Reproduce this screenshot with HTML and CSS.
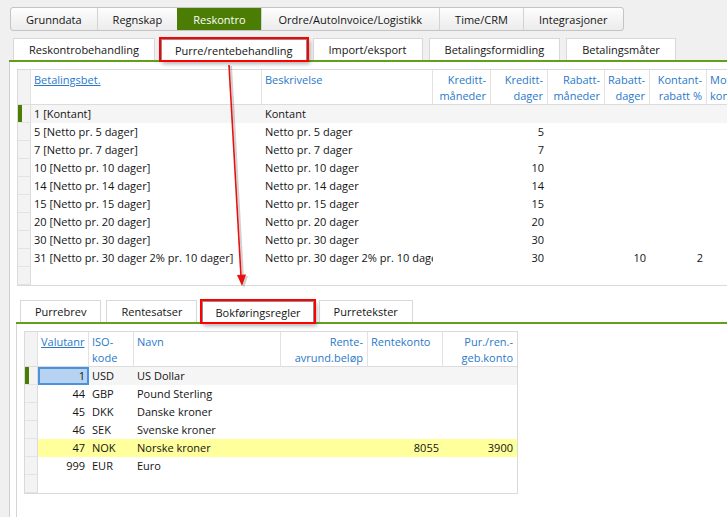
FILE: index.html
```html
<!DOCTYPE html>
<html lang="no">
  <head>
    <meta charset="utf-8" />
    <title>Reskontro – Purre/rentebehandling</title>
    <link rel="stylesheet" href="styles.css">
  </head>
  <body>
    <nav class="main-tabs">
      <span class="main-tab">Grunndata</span>
      <span class="main-tab">Regnskap</span>
      <span class="main-tab active">Reskontro</span>
      <span class="main-tab wide">Ordre/AutoInvoice/Logistikk</span>
      <span class="main-tab">Time/CRM</span>
      <span class="main-tab">Integrasjoner</span>
    </nav>

    <div class="sub-tabs">
      <span class="sub-tab">Reskontrobehandling</span>
      <span class="sub-tab active marked">Purre/rentebehandling</span>
      <span class="sub-tab">Import/eksport</span>
      <span class="sub-tab">Betalingsformidling</span>
      <span class="sub-tab">Betalingsmåter</span>
    </div>

    <section class="panel">
      <div class="grid terms">
        <div class="row head">
          <span class="ind"></span>
          <span class="sorted">Betalingsbet.</span>
          <span>Beskrivelse</span>
          <span class="num">Kreditt-<br>måneder</span>
          <span class="num">Kreditt-<br>dager</span>
          <span class="num">Rabatt-<br>måneder</span>
          <span class="num">Rabatt-<br>dager</span>
          <span class="num">Kontant-<br>rabatt %</span>
          <span>Mottaks-<br>konto</span>
        </div>
        <div class="row current">
          <span class="ind"></span>
          <span>1 [Kontant]</span>
          <span>Kontant</span>
          <span></span><span></span><span></span><span></span><span></span><span></span>
        </div>
        <div class="row">
          <span class="ind"></span>
          <span>5 [Netto pr. 5 dager]</span>
          <span>Netto pr. 5 dager</span>
          <span></span><span class="num">5</span><span></span><span></span><span></span><span></span>
        </div>
        <div class="row">
          <span class="ind"></span>
          <span>7 [Netto pr. 7 dager]</span>
          <span>Netto pr. 7 dager</span>
          <span></span><span class="num">7</span><span></span><span></span><span></span><span></span>
        </div>
        <div class="row">
          <span class="ind"></span>
          <span>10 [Netto pr. 10 dager]</span>
          <span>Netto pr. 10 dager</span>
          <span></span><span class="num">10</span><span></span><span></span><span></span><span></span>
        </div>
        <div class="row">
          <span class="ind"></span>
          <span>14 [Netto pr. 14 dager]</span>
          <span>Netto pr. 14 dager</span>
          <span></span><span class="num">14</span><span></span><span></span><span></span><span></span>
        </div>
        <div class="row">
          <span class="ind"></span>
          <span>15 [Netto pr. 15 dager]</span>
          <span>Netto pr. 15 dager</span>
          <span></span><span class="num">15</span><span></span><span></span><span></span><span></span>
        </div>
        <div class="row">
          <span class="ind"></span>
          <span>20 [Netto pr. 20 dager]</span>
          <span>Netto pr. 20 dager</span>
          <span></span><span class="num">20</span><span></span><span></span><span></span><span></span>
        </div>
        <div class="row">
          <span class="ind"></span>
          <span>30 [Netto pr. 30 dager]</span>
          <span>Netto pr. 30 dager</span>
          <span></span><span class="num">30</span><span></span><span></span><span></span><span></span>
        </div>
        <div class="row">
          <span class="ind"></span>
          <span>31 [Netto pr. 30 dager 2% pr. 10 dager]</span>
          <span>Netto pr. 30 dager 2% pr. 10 dager</span>
          <span></span><span class="num">30</span><span></span><span class="num">10</span><span class="num">2</span><span></span>
        </div>
        <div class="row">
          <span class="ind"></span>
          <span></span><span></span><span></span><span></span><span></span><span></span><span></span><span></span>
        </div>
      </div>

      <div class="lower">
        <div class="sub-tabs small">
          <span class="sub-tab">Purrebrev</span>
          <span class="sub-tab">Rentesatser</span>
          <span class="sub-tab active marked">Bokføringsregler</span>
          <span class="sub-tab">Purretekster</span>
        </div>

        <div class="inner-panel">
          <div class="grid currency">
            <div class="row head">
              <span class="ind"></span>
              <span class="num sorted">Valutanr</span>
              <span>ISO-<br>kode</span>
              <span>Navn</span>
              <span class="num">Rente-<br>avrund.beløp</span>
              <span>Rentekonto</span>
              <span class="num">Pur./ren.-<br>geb.konto</span>
            </div>
            <div class="row current">
              <span class="ind"></span>
              <span class="num focus">1</span>
              <span>USD</span>
              <span>US Dollar</span>
              <span></span><span></span><span></span>
            </div>
            <div class="row">
              <span class="ind"></span>
              <span class="num">44</span>
              <span>GBP</span>
              <span>Pound Sterling</span>
              <span></span><span></span><span></span>
            </div>
            <div class="row">
              <span class="ind"></span>
              <span class="num">45</span>
              <span>DKK</span>
              <span>Danske kroner</span>
              <span></span><span></span><span></span>
            </div>
            <div class="row">
              <span class="ind"></span>
              <span class="num">46</span>
              <span>SEK</span>
              <span>Svenske kroner</span>
              <span></span><span></span><span></span>
            </div>
            <div class="row highlight">
              <span class="ind"></span>
              <span class="num">47</span>
              <span>NOK</span>
              <span>Norske kroner</span>
              <span></span>
              <span class="num">8055</span>
              <span class="num">3900</span>
            </div>
            <div class="row">
              <span class="ind"></span>
              <span class="num">999</span>
              <span>EUR</span>
              <span>Euro</span>
              <span></span><span></span><span></span>
            </div>
            <div class="row">
              <span class="ind"></span>
              <span></span><span></span><span></span><span></span><span></span><span></span>
            </div>
          </div>
        </div>
      </div>
    </section>

    <!-- annotation arrow from the marked sub tab down to the marked lower tab -->
    <svg class="arrow" width="727" height="517" viewBox="0 0 727 517">
      <line x1="231" y1="66" x2="243" y2="278" stroke="rgba(0,0,0,0.18)" stroke-width="2" />
      <polygon points="239,277 248,276 244,288" fill="rgba(0,0,0,0.18)" />
      <line x1="229" y1="65" x2="241" y2="276" stroke="#e81010" stroke-width="1.6" />
      <polygon points="237,275 246,274.5 242,286" fill="#e81010" />
    </svg>
  </body>
</html>
```

FILE: styles.css
```css
html {
  height: 100%;
}

body {
  margin: 0;
  height: 100%;
  display: flex;
  flex-direction: column;
  position: relative;
  overflow: hidden;
  background: #f0f0f0;
  font-family: "Open Sans", "Noto Sans", sans-serif;
  font-size: 11px;
  color: #141414;
}

/* top level tabs */

.main-tabs {
  display: flex;
  align-self: flex-start;
  box-sizing: border-box;
  height: 24px;
  margin: 7px 0 0 10px;
  border: 1px solid #c4c4c4;
  border-radius: 3px;
  background: linear-gradient(#fdfdfd, #ececec);
  overflow: hidden;
}

.main-tab {
  display: flex;
  align-items: center;
  padding: 0 15px;
  border-left: 1px solid #d3d3d3;
}

.main-tab.wide {
  padding: 0 17px;
}

.main-tab:first-child {
  border-left: 0;
}

.main-tab.active {
  background: #4b7c03;
  border-color: #4b7c03;
  color: #fff;
}

/* second level tabs */

.sub-tabs {
  display: flex;
  align-items: flex-end;
  gap: 6px;
  margin: 7px 0 0 9px;
  padding-left: 4px;
  border-bottom: 2px solid #62a01c;
}

.sub-tab {
  display: flex;
  align-items: center;
  box-sizing: border-box;
  height: 22px;
  padding: 0 15px;
  border: 1px solid #d8d8d8;
  border-bottom: 0;
  background: #fff;
}

.sub-tab.marked {
  position: relative;
  z-index: 1;
  height: 21px;
  padding: 0 13px;
  border-color: #8d8d8d;
  box-shadow: 0 0 0 2px #f00, 2px 3px 4px 1px rgba(0, 0, 0, 0.3);
}

.panel {
  flex: 1;
  display: flex;
  flex-direction: column;
  margin-left: 9px;
  padding-top: 7px;
  border-left: 1px solid #cfcfcf;
  background: #fff;
  overflow: hidden;
}

/* data grids */

.grid {
  flex: none;
  border: 1px solid #dadada;
  background: #fff;
}

.terms {
  width: 750px;
  margin-left: 7px;
}

.currency {
  width: 492px;
}

.row {
  display: grid;
  height: 18px;
  line-height: 18px;
}

.terms .row {
  grid-template-columns: 13px 231px 171px 58px 57px 57px 45px 57px 60px;
}

.currency .row {
  grid-template-columns: 13px 51px 45px 147px 87px 75px 74px;
}

.row > span {
  box-sizing: border-box;
  padding: 0 4px 0 3px;
  white-space: nowrap;
  overflow: hidden;
}

.row .num {
  text-align: right;
}

.row .ind {
  padding: 0;
  background: #f3f3f3;
  border-right: 1px solid #dcdcdc;
  border-bottom: 1px solid #e3e3e3;
}

.row.head {
  height: 35px;
  line-height: 16px;
  color: #2a79c9;
}

.row.head > span {
  padding-top: 2px;
  border-right: 1px solid #e2e2e2;
  border-bottom: 1px solid #dcdcdc;
}

.row.head > span:last-child {
  border-right: 0;
}

.row.head .sorted {
  text-decoration: underline;
}

.row.current {
  background: #f5f5f5;
}

.row.current .ind {
  box-shadow: inset 4px 0 0 #4b7c03;
}

.row.highlight > span:not(.ind) {
  background: #ffff9c;
}

.row .focus {
  background: #b7d3f1;
  box-shadow: inset 0 0 0 2px #4a93dc;
}

/* lower part with its own tabs */

.lower {
  flex: 1;
  display: flex;
  flex-direction: column;
  margin: 14px 0 0 6px;
}

.sub-tabs.small {
  margin: 0;
  padding-left: 4px;
  gap: 5px;
}

.sub-tabs.small .sub-tab {
  height: 22px;
  padding: 0 14px;
}

.sub-tabs.small .sub-tab.marked {
  height: 21px;
  padding: 0 12px;
}

.inner-panel {
  flex: 1;
  padding: 7px 0 0 7px;
  border-left: 1px solid #d4d4d4;
}

.arrow {
  position: absolute;
  top: 0;
  left: 0;
  pointer-events: none;
}
```
